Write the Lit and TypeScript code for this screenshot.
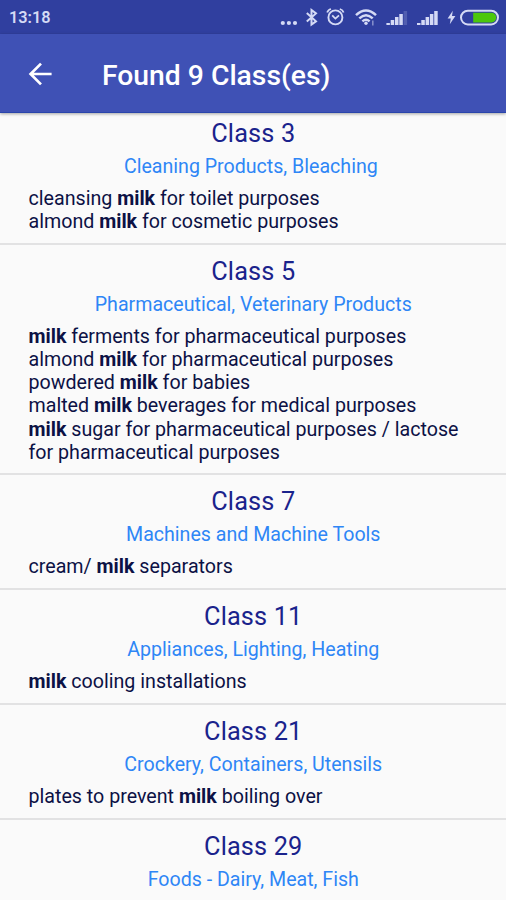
import { LitElement, html, css, svg } from "lit";
import { customElement, property } from "lit/decorators.js";

interface ClassEntry {
  id: number;
  title: string;
  goods: string[];
}

const TERM = "milk";

const CLASSES: ClassEntry[] = [
  {
    id: 3,
    title: "Cleaning Products, Bleaching\u00a0",
    goods: ["cleansing milk for toilet purposes", "almond milk for cosmetic purposes"],
  },
  {
    id: 5,
    title: "Pharmaceutical, Veterinary Products",
    goods: [
      "milk ferments for pharmaceutical purposes",
      "almond milk for pharmaceutical purposes",
      "powdered milk for babies",
      "malted milk beverages for medical purposes",
      "milk sugar for pharmaceutical purposes / lactose for pharmaceutical purposes",
    ],
  },
  { id: 7, title: "Machines and Machine Tools", goods: ["cream/ milk separators"] },
  { id: 11, title: "Appliances, Lighting, Heating", goods: ["milk cooling installations"] },
  { id: 21, title: "Crockery, Containers, Utensils", goods: ["plates to prevent milk boiling over"] },
  { id: 29, title: "Foods - Dairy, Meat, Fish", goods: [] },
];

const signalBars = (x: number, lit: number) =>
  [0, 1, 2, 3, 4].map((i) => {
    const h = 2 + i * 3;
    return svg`<rect x=${x + i * 4.3} y=${25 - h} width="3.5" height=${h}
      fill="#d5daf5" fill-opacity=${i < lit ? 1 : 0.2}></rect>`;
  });

@customElement("status-bar")
class StatusBar extends LitElement {
  static styles = css`
    :host {
      display: flex;
      justify-content: space-between;
      height: 34px;
      background: #303f9f;
      color: #d5daf5;
    }
    .clock {
      padding-left: 9px;
      font-size: 16.3px;
      font-weight: 600;
      line-height: 36px;
    }
    .icons {
      display: block;
    }
  `;

  render() {
    return html`
      <span class="clock">13:18</span>
      <svg class="icons" width="230" height="34" viewBox="276 0 230 34" fill="none" stroke="#d5daf5">
        <g fill="#d5daf5" stroke="none">
          <circle cx="282.8" cy="23" r="2.1"></circle>
          <circle cx="288.9" cy="23" r="2.1"></circle>
          <circle cx="295" cy="23" r="2.1"></circle>
        </g>
        <path d="M306.8 13 L316 21.3 L311.5 24.6 V10 L316 13.4 L306.8 21.6" stroke-width="2"></path>
        <circle cx="335.4" cy="17.4" r="7" stroke-width="1.9"></circle>
        <path d="M332.2 15.4 L335.4 18.6 L339 15.4" stroke-width="1.8"></path>
        <path d="M327.2 12.6 Q328 9.8 331 9 M343.6 12.6 Q342.8 9.8 339.8 9" stroke-width="1.8"></path>
        <path
          d="M356 15.2 Q366 5.8 376 15.2 M359.3 18.4 Q366 12 372.7 18.4 M362.4 21.4 Q366 18.2 369.6 21.4"
          stroke-width="2.5"
        ></path>
        <circle cx="366" cy="23.3" r="1.7" fill="#d5daf5" stroke="none"></circle>
        <path d="M372.8 20.5 V25.5" stroke-width="1.6" stroke-opacity="0.5"></path>
        <g stroke="none">${signalBars(386.4, 4)}${signalBars(417, 5)}</g>
        <path d="M452.8 10.8 L447.6 18.4 H450.8 L449.8 24.2 L455.4 16 H452 Z" fill="#d5daf5" stroke="none"></path>
        <rect x="461" y="10.8" width="37" height="13.6" rx="6.8" stroke-width="2"></rect>
        <path d="M473.2 12.8 H491.5 A4.8 4.8 0 0 1 491.5 22.4 H473.2 Z" fill="#4cc80c" stroke="none"></path>
      </svg>
    `;
  }
}

@customElement("app-bar")
class AppBar extends LitElement {
  static styles = css`
    :host {
      display: flex;
      align-items: center;
      box-sizing: border-box;
      height: 79px;
      padding: 1px 28px 0;
      background: #3f51b5;
      border-bottom: 1px solid #2a45ab;
      box-shadow: 0 1px 3px rgba(0, 0, 0, 0.35);
      color: #fff;
      position: relative;
      z-index: 1;
    }
    .back {
      display: block;
      flex: none;
    }
    .title {
      margin: 4px 0 0 50px;
      font-size: 28.3px;
      font-weight: 500;
      line-height: 32px;
      white-space: nowrap;
    }
  `;

  @property() heading = "";

  render() {
    return html`
      <svg class="back" width="24" height="24" viewBox="0 0 24 24" fill="none" stroke="#fff" stroke-width="2.7">
        <path d="M23.6 12 H2.8 M13 1.6 L2.6 12 L13 22.4"></path>
      </svg>
      <span class="title">${this.heading}</span>
    `;
  }
}

@customElement("class-item")
class ClassItem extends LitElement {
  static styles = css`
    :host {
      display: block;
      box-sizing: border-box;
      min-height: 114.7px;
      padding: 11px 28px 9.5px 28.5px;
      border-bottom: 2px solid #e2e2e3;
    }
    .number {
      font-size: 25.3px;
      line-height: 31px;
      letter-spacing: 0.15px;
      text-align: center;
      color: #1a238c;
    }
    .title {
      margin-top: 5px;
      font-size: 19.6px;
      line-height: 25px;
      text-align: center;
      white-space: pre;
      color: #2e86f6;
    }
    .goods {
      margin-top: 8px;
      font-size: 19.65px;
      line-height: 23.17px;
      color: #0c1145;
    }
    b {
      font-weight: 700;
    }
  `;

  @property({ attribute: false }) entry!: ClassEntry;

  private highlight(text: string) {
    const [before, after] = text.split(TERM);
    return html`${before}${text.includes(TERM) ? html`<b>${TERM}</b>${after}` : ""}`;
  }

  render() {
    const { id, title, goods } = this.entry;
    return html`
      <div class="number">Class ${id}</div>
      <div class="title">${title}</div>
      <div class="goods">${goods.map((g) => html`<div>${this.highlight(g)}</div>`)}</div>
    `;
  }
}

@customElement("app-root")
class AppRoot extends LitElement {
  static styles = css`
    :host {
      display: flex;
      flex-direction: column;
      height: 900px;
      overflow: hidden;
      background: #fafafa;
      font-family: Roboto, "Liberation Sans", sans-serif;
    }
    status-bar,
    app-bar {
      flex: none;
    }
    .list {
      flex: 1;
      min-height: 0;
      overflow: hidden;
    }
    .scrolled {
      margin-top: -5.9px;
    }
  `;

  render() {
    return html`
      <status-bar></status-bar>
      <app-bar heading="Found 9 Class(es)"></app-bar>
      <div class="list">
        <div class="scrolled">
          ${CLASSES.map((entry) => html`<class-item .entry=${entry}></class-item>`)}
        </div>
      </div>
    `;
  }
}
